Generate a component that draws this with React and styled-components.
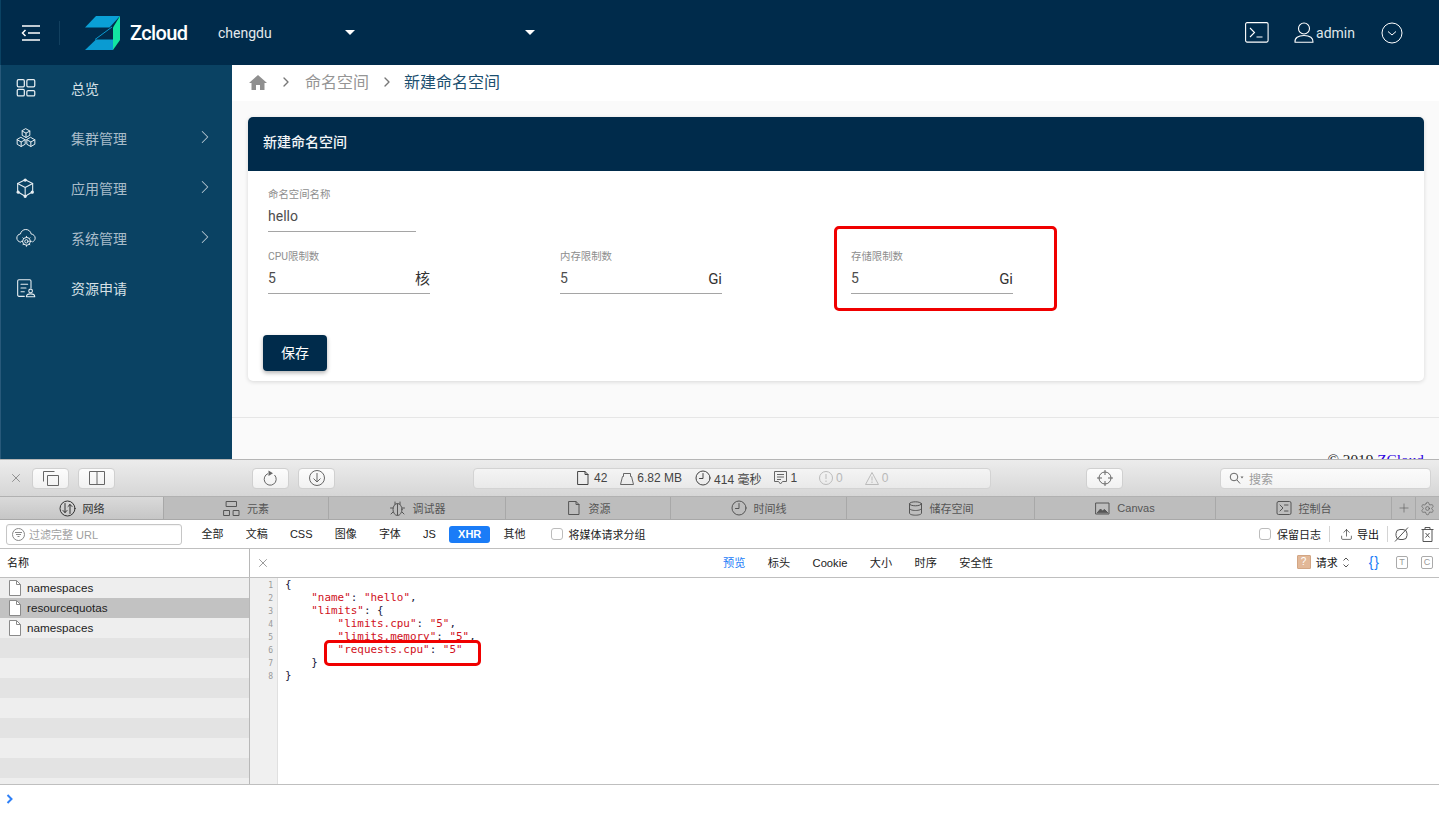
import React from "react";
import styled, { createGlobalStyle } from "styled-components";
import { ChevronRight, X, Plus, Settings, Upload } from "lucide-react";

const NAV = [
  { key: "overview", label: "总览" },
  { key: "cluster", label: "集群管理", more: true },
  { key: "app", label: "应用管理", more: true },
  { key: "system", label: "系统管理", more: true },
  { key: "request", label: "资源申请" },
];

const TABS = [
  { key: "net", label: "网络", width: 164, active: true },
  { key: "el", label: "元素", width: 165 },
  { key: "dbg", label: "调试器", width: 177 },
  { key: "res", label: "资源", width: 165 },
  { key: "time", label: "时间线", width: 176 },
  { key: "store", label: "储存空间", width: 188 },
  { key: "canvas", label: "Canvas", width: 181 },
  { key: "con", label: "控制台", width: 176 },
];

const FILTERS = ["全部", "文稿", "CSS", "图像", "字体", "JS", "XHR", "其他"];
const DETAIL = ["预览", "标头", "Cookie", "大小", "时序", "安全性"];
const FILES = ["namespaces", "resourcequotas", "namespaces"];
const BLANK_ROWS = [3, 4, 5, 6, 7, 8, 9, 10];

const Glyph = ({ size = 20, box = 24, sw = 1.5, children }) => (
  <svg width={size} height={size} viewBox={`0 0 ${box} ${box}`} fill="none" stroke="currentColor" strokeWidth={sw} strokeLinecap="round" strokeLinejoin="round">
    {children}
  </svg>
);

const NavIcon = ({ name }) => {
  if (name === "overview")
    return (
      <Glyph>
        <rect x="1.5" y="2" width="8.5" height="8.5" rx="1.5" />
        <rect x="13" y="2" width="9.5" height="8.5" rx="1.5" />
        <rect x="1.5" y="13.5" width="8.5" height="8" rx="1.5" />
        <rect x="13" y="15" width="9.5" height="6.5" rx="1.5" />
      </Glyph>
    );
  if (name === "cluster")
    return (
      <Glyph sw={1.2}>
        <path d="M12 1l4.600 2.600v5.200L12 11.400 7.400 8.800V3.600zM7.400 3.600L12 6.200l4.600-2.600M12 6.200v5.200" />
        <path d="M6.200 11.400l4.800 2.700v5.400l-4.800 2.700-4.800-2.700v-5.400zM1.400 14.100l4.800 2.700 4.800-2.700M6.200 16.800v5.400" />
        <path d="M17.800 11.400l4.800 2.700v5.400l-4.800 2.700-4.800-2.700v-5.400zM13 14.100l4.800 2.700 4.800-2.700M17.800 16.800v5.400" />
      </Glyph>
    );
  if (name === "app")
    return (
      <Glyph sw={1.3}>
        <path d="M11 2l9 4.500v10L11 22l-9-5.500v-10z" />
        <path d="M2 6.500l9 5 9-5M11 11.500V22" />
        <circle cx="11" cy="2.500" r="1.300" fill="currentColor" />
        <circle cx="2.500" cy="17" r="1.300" fill="currentColor" />
        <circle cx="19.500" cy="17" r="1.300" fill="currentColor" />
        <circle cx="11" cy="22" r="1.300" fill="currentColor" />
      </Glyph>
    );
  if (name === "system")
    return (
      <Glyph sw={1.2}>
        <path d="M5.500 17C2.800 16.600 1 14.500 1 12c0-2.600 1.900-4.600 4.300-4.800C6 4 8.500 1.800 11.700 1.800c3.400 0 6 2.300 6.500 5.400 2.800.3 4.800 2.400 4.800 5 0 2-1.200 3.600-3 4.400" />
        <circle cx="12.500" cy="16" r="2" />
        <circle cx="12.500" cy="16" r="4.600" />
        <path d="M12.500 10v1.400M12.500 20.600V22M6.500 16h1.400M17.100 16h1.400M8.300 11.800l1 1M15.700 19.200l1 1M16.700 11.800l-1 1M9.300 19.200l-1 1" />
      </Glyph>
    );
  return (
    <Glyph sw={1.3}>
      <path d="M10 22H3.500A1.500 1.500 0 012 20.500v-17A1.500 1.500 0 013.500 2h13A1.500 1.500 0 0118 3.500V12" />
      <path d="M6 7.500h8M6 12h6M6 16.500h4" />
      <circle cx="17.500" cy="15.500" r="2.200" />
      <path d="M12.500 22.500c0-2.500 2-3.500 5-3.500s5 1 5 3.500z" />
    </Glyph>
  );
};

const Logo = () => (
  <svg width="35" height="34" viewBox="0 0 35 34">
    <path d="M11 0h24L24.500 11.500H0z" fill="#0aa0d6" />
    <path d="M35 0v24l-7 10V11.500z" fill="#12e6a2" />
    <path d="M11 23.500h17V34H0z" fill="#0a9bd2" />
    <path d="M10 23.500L27 11" stroke="#0a9bd2" strokeWidth="1" fill="none" />
  </svg>
);

const TabIcon = ({ name }) => {
  if (name === "net")
    return (
      <Glyph size={17} box={17} sw={1}>
        <circle cx="8.500" cy="8.500" r="7.500" />
        <path d="M6 3.500v9M4 10.500l2 2 2-2M11 13.500v-9M9 6.500l2-2 2 2" />
      </Glyph>
    );
  if (name === "el")
    return (
      <Glyph size={17} box={17} sw={1}>
        <rect x="3.500" y="1.500" width="10" height="5" />
        <rect x="1" y="10.500" width="5.500" height="5" />
        <rect x="10.500" y="10.500" width="5.500" height="5" />
      </Glyph>
    );
  if (name === "dbg")
    return (
      <Glyph size={17} box={17} sw={1}>
        <ellipse cx="8.500" cy="9.500" rx="4.500" ry="6" />
        <path d="M6 4.500V2M11 4.500V2M4 8H1.500M15.500 8H13M4 12l-2 2M13 12l2 2M8.500 4v11" />
      </Glyph>
    );
  if (name === "res")
    return (
      <Glyph size={16} box={16} sw={1}>
        <path d="M3 1.500h7l3 3v10H3zM10 1.500v3h3" />
      </Glyph>
    );
  if (name === "time")
    return (
      <Glyph size={16} box={16} sw={1}>
        <circle cx="8" cy="8" r="7" />
        <path d="M8 3.500V8.500H4.500" />
      </Glyph>
    );
  if (name === "store")
    return (
      <Glyph size={15} box={15} sw={1}>
        <ellipse cx="7.500" cy="2.800" rx="6" ry="2" />
        <path d="M1.500 2.800v9.400c0 1.100 2.700 2 6 2s6-.9 6-2V2.800M1.500 7.500c0 1.100 2.700 2 6 2s6-.9 6-2" />
      </Glyph>
    );
  if (name === "canvas")
    return (
      <Glyph size={15} box={15} sw={1}>
        <rect x="1" y="2" width="13" height="11" />
        <path d="M2.500 11.500L5.500 8l2 2 2-1.500 3 3z" fill="currentColor" />
      </Glyph>
    );
  return (
    <Glyph size={16} box={16} sw={1}>
      <rect x="1" y="1.500" width="14" height="13" rx="1.500" />
      <path d="M4 5l3 3-3 3M8.500 11H12M8.500 5H12" />
    </Glyph>
  );
};

const DocIcon = () => (
  <svg width="12" height="16" viewBox="0 0 12 16" fill="#fff" stroke="#8a8a8a" strokeWidth="1">
    <path d="M.5.500h7l4 4v11H.500z" />
    <path d="M7.500.500v4h4" fill="none" />
  </svg>
);

export default function App() {
  return (
    <Page>
      <GlobalStyle />
      <AppArea>
        <Header>
          <MenuButton>
            <svg width="20" height="18" viewBox="0 0 20 18" fill="none" stroke="#fff" strokeWidth="1.500">
              <path d="M1 2h18M7 9h12M1 16h18M4.500 6L1.500 9l3 3" />
            </svg>
          </MenuButton>
          <HeaderDivider />
          <LogoWrap>
            <Logo />
            <Brand>Zcloud</Brand>
          </LogoWrap>
          <Selector $width="137px">
            <span>chengdu</span>
            <Caret />
          </Selector>
          <Selector $width="157px">
            <span />
            <Caret />
          </Selector>
          <HeaderRight>
            <svg width="24" height="21" viewBox="0 0 24 21" fill="none" stroke="#fff" strokeWidth="1.100">
              <rect x=".600" y=".600" width="22.500" height="19.500" rx="1.500" />
              <path d="M5 6l4.500 4.500L5 15M11.500 15h6" />
            </svg>
            <UserBox>
              <svg width="20" height="21" viewBox="0 0 20 21" fill="none" stroke="#fff" strokeWidth="1.100">
                <circle cx="10" cy="6.500" r="5.500" />
                <path d="M1 20.300c-.4-4.300 3-6.800 9-6.800s9.400 2.500 9 6.800z" strokeLinejoin="round" />
              </svg>
              <span>admin</span>
            </UserBox>
            <svg width="22" height="22" viewBox="0 0 22 22" fill="none" stroke="#fff" strokeWidth="1">
              <circle cx="11" cy="11" r="10" />
              <path d="M7 9.500l4 3.500 4-3.500" />
            </svg>
          </HeaderRight>
        </Header>
        <Body>
          <Sidebar>
            {NAV.map((item) => (
              <NavItem key={item.key}>
                <NavIconBox>
                  <NavIcon name={item.key} />
                </NavIconBox>
                <NavLabel $dim={item.more}>{item.label}</NavLabel>
                {item.more && (
                  <NavArrow>
                    <ChevronRight size={22} strokeWidth={1.100} />
                  </NavArrow>
                )}
              </NavItem>
            ))}
          </Sidebar>
          <Main>
            <Crumbs>
              <svg width="18" height="15" viewBox="0 0 18 15" fill="#8f8f8f">
                <path d="M9 0L0 8h2.500v7h4.500v-5h4v5h4.500V8H18z" />
              </svg>
              <ChevronRight size={16} color="#777" strokeWidth={2} />
              <CrumbLink>命名空间</CrumbLink>
              <ChevronRight size={16} color="#777" strokeWidth={2} />
              <CrumbCurrent>新建命名空间</CrumbCurrent>
            </Crumbs>
            <Content>
              <Card>
                <CardHead>新建命名空间</CardHead>
                <CardBody>
                  <Field $width="148px">
                    <FieldLabel>命名空间名称</FieldLabel>
                    <FieldValue>hello</FieldValue>
                  </Field>
                  <FieldRow>
                    <Field $width="162px">
                      <FieldLabel>CPU限制数</FieldLabel>
                      <FieldValue>
                        5<Unit>核</Unit>
                      </FieldValue>
                    </Field>
                    <Field $width="162px">
                      <FieldLabel>内存限制数</FieldLabel>
                      <FieldValue>
                        5<Unit>Gi</Unit>
                      </FieldValue>
                    </Field>
                    <MarkedField $width="162px">
                      <FieldLabel>存储限制数</FieldLabel>
                      <FieldValue>
                        5<Unit>Gi</Unit>
                      </FieldValue>
                      <FieldMark />
                    </MarkedField>
                  </FieldRow>
                  <SaveButton>保存</SaveButton>
                </CardBody>
              </Card>
            </Content>
            <Footer>
              © 2019 <FooterLink>ZCloud</FooterLink>
            </Footer>
          </Main>
        </Body>
      </AppArea>

      <Devtools>
        <Toolbar>
          <ToolClose>
            <X size={14} strokeWidth={1} />
          </ToolClose>
          <ToolButton>
            <svg width="16" height="15" viewBox="0 0 16 15" fill="none" stroke="#666">
              <path d="M.500 10.500V.500h11M4.500 4.500h11v10h-11z" />
            </svg>
          </ToolButton>
          <ToolButton>
            <svg width="16" height="14" viewBox="0 0 16 14" fill="none" stroke="#666">
              <path d="M.500.500h15v13H.500zM8 .500v13" />
            </svg>
          </ToolButton>
          <ToolGap $w="119px" />
          <ToolButton>
            <svg width="15" height="16" viewBox="0 0 15 16" fill="none" stroke="#666">
              <path d="M5 3.600A6 6 0 1 0 11.500 5" />
              <path d="M5.500 .500L10 3.300 5.500 6z" fill="#666" stroke="none" />
            </svg>
          </ToolButton>
          <ToolButton>
            <svg width="16" height="16" viewBox="0 0 16 16" fill="none" stroke="#666">
              <circle cx="8" cy="8" r="7.500" />
              <path d="M8 3v9M4.500 8.500L8 12l3.500-3.500" />
            </svg>
          </ToolButton>
          <StatusBar>
            <StatusItem>
              <TabIcon name="res" />
              42
            </StatusItem>
            <StatusItem>
              <svg width="14" height="13" viewBox="0 0 14 13" fill="none" stroke="#666">
                <path d="M.500 12.500l2-8h1V1.500h7v3h1l2 8z" />
              </svg>
              6.82 MB
            </StatusItem>
            <StatusItem>
              <TabIcon name="time" />
              414 毫秒
            </StatusItem>
            <StatusItem>
              <svg width="13" height="14" viewBox="0 0 13 14" fill="none" stroke="#666">
                <path d="M.500.500h12v10h-4l-2 2.500-2-2.500h-4zM3 3.500h7M3 6h7M3 8.500h4" />
              </svg>
              1
            </StatusItem>
            <StatusItem $muted>
              <svg width="14" height="14" viewBox="0 0 14 14" fill="none" stroke="#bbb">
                <circle cx="7" cy="7" r="6.500" />
                <path d="M7 3v5M7 9.500v1.500" />
              </svg>
              0
            </StatusItem>
            <StatusItem $muted>
              <svg width="14" height="13" viewBox="0 0 14 13" fill="none" stroke="#bbb">
                <path d="M7 .500l6.500 12H.500zM7 4.500v4M7 9.500v1.500" />
              </svg>
              0
            </StatusItem>
          </StatusBar>
          <ToolGap $w="77px" />
          <ToolButton>
            <svg width="16" height="16" viewBox="0 0 16 16" fill="none" stroke="#666">
              <circle cx="8" cy="8" r="6" />
              <path d="M8 0v5M8 11v5M0 8h5M11 8h5" />
            </svg>
          </ToolButton>
          <SearchBox>
            <svg width="15" height="12" viewBox="0 0 15 12" fill="none" stroke="#666">
              <circle cx="5" cy="5" r="3.800" />
              <path d="M8 8l3 3.500" />
              <path d="M11.500 4.500h3l-1.500 2z" fill="#666" stroke="none" />
            </svg>
            搜索
          </SearchBox>
        </Toolbar>

        <TabBar>
          {TABS.map((tab) => (
            <Tab key={tab.key} $width={tab.width} $active={tab.active}>
              <TabIcon name={tab.key} />
              {tab.label}
            </Tab>
          ))}
          <TabSquare>
            <Plus size={14} strokeWidth={1} />
          </TabSquare>
          <TabSquare $last>
            <Settings size={15} strokeWidth={1} />
          </TabSquare>
        </TabBar>

        <FilterBar>
          <UrlFilter>
            <svg width="13" height="13" viewBox="0 0 13 13" fill="none" stroke="#888">
              <circle cx="6.500" cy="6.500" r="6" />
              <path d="M3 4.500h7M4 6.500h5M5.500 8.500h2" />
            </svg>
            过滤完整 URL
          </UrlFilter>
          <FilterList>
            {FILTERS.map((name) => (
              <FilterTag key={name} $active={name === "XHR"}>
                {name}
              </FilterTag>
            ))}
          </FilterList>
          <CheckLabel $left="16px">
            <Check />
            将媒体请求分组
          </CheckLabel>
          <FilterRight>
            <CheckLabel>
              <Check />
              保留日志
            </CheckLabel>
            <VLine $after="2px" />
            <ExportBtn>
              <Upload size={13} strokeWidth={1.100} />
              导出
            </ExportBtn>
            <VLine $after="-2px" />
            <svg width="15" height="15" viewBox="0 0 15 15" fill="none" stroke="#555">
              <rect x="2" y="2.500" width="11" height="10" rx="4" />
              <path d="M1 14.500L14 .500" />
            </svg>
            <TrashSlot>
              <svg width="13" height="15" viewBox="0 0 13 15" fill="none" stroke="#555">
                <path d="M.500 2.500h12M4 2.500V.500h5v2M2 2.500v12h9v-12M4.500 6l4 4.500M8.500 6l-4 4.500" />
              </svg>
            </TrashSlot>
          </FilterRight>
        </FilterBar>

        <SplitHead>
          <NameCol>名称</NameCol>
          <DetailHead>
            <DetailClose>
              <X size={14} strokeWidth={1} />
            </DetailClose>
            <DetailTabs>
              {DETAIL.map((name, i) => (
                <DetailTab key={name} $active={i === 0}>
                  {name}
                </DetailTab>
              ))}
            </DetailTabs>
            <DetailRight>
              <QMark>?</QMark>
              <span>请求</span>
              <svg width="6" height="11" viewBox="0 0 6 11" fill="none" stroke="#555">
                <path d="M.500 3.500L3 1l2.500 2.500M.500 7.500L3 10l2.500-2.500" />
              </svg>
              <BlueBrace>{"{}"}</BlueBrace>
              <TinyBox>T</TinyBox>
              <TinyBox>C</TinyBox>
            </DetailRight>
          </DetailHead>
        </SplitHead>

        <Split>
          <FileList>
            {FILES.map((name, i) => (
              <FileRow key={i} $selected={i === 1}>
                <DocIcon />
                <FileName>{name}</FileName>
              </FileRow>
            ))}
            {BLANK_ROWS.map((n) => (
              <FileRow key={n} $dark={n % 2 === 1} />
            ))}
          </FileList>
          <Gutter>
            {[1, 2, 3, 4, 5, 6, 7, 8].map((n) => (
              <span key={n}>{n}</span>
            ))}
          </Gutter>
          <Code>
            <Line>{"{"}</Line>
            <Line $i={1}>
              <Str>"name"</Str>: <Str>"hello"</Str>,
            </Line>
            <Line $i={1}>
              <Str>"limits"</Str>: {"{"}
            </Line>
            <Line $i={2}>
              <Str>"limits.cpu"</Str>: <Str>"5"</Str>,
            </Line>
            <Line $i={2}>
              <Str>"limits.memory"</Str>: <Str>"5"</Str>,
            </Line>
            <Line $i={2}>
              <Str>"requests.cpu"</Str>: <Str>"5"</Str>
            </Line>
            <Line $i={1}>{"}"}</Line>
            <Line>{"}"}</Line>
            <CodeMark />
          </Code>
        </Split>
        <ConsoleLine>
          <svg width="7" height="10" viewBox="0 0 7 10" fill="none" stroke="#2f80f7" strokeWidth="2">
            <path d="M1.500 1L5.500 5l-4 4" />
          </svg>
        </ConsoleLine>
      </Devtools>
    </Page>
  );
}

const GlobalStyle = createGlobalStyle`
  html, body { margin: 0; padding: 0; height: 813px; overflow: hidden; }
  body { font-family: Roboto, "Noto Sans CJK SC", sans-serif; }
  * { box-sizing: border-box; }
`;

const Page = styled.div`
  width: 1439px;
  height: 813px;
  display: flex;
  flex-direction: column;
  overflow: hidden;
  background: #fff;
`;

const AppArea = styled.div`
  height: 459px;
  flex: none;
  display: flex;
  flex-direction: column;
  overflow: hidden;
`;

const Header = styled.header`
  height: 65px;
  flex: none;
  background: #002b4b;
  color: #fff;
  display: flex;
  align-items: center;
  padding-left: 20px;
  border-left: 1px solid #0a4263;
`;

const MenuButton = styled.div`
  width: 20px;
  height: 18px;
  display: flex;
`;

const HeaderDivider = styled.div`
  width: 1px;
  height: 24px;
  margin-left: 18px;
  background: #12405f;
`;

const LogoWrap = styled.div`
  display: flex;
  align-items: center;
  margin-left: 25px;
  width: 133px;
`;

const Brand = styled.div`
  font-family: Roboto, sans-serif;
  font-size: 20px;
  font-weight: 500;
  margin-left: 10px;
  letter-spacing: -0.6px;
`;

const Selector = styled.div`
  width: ${(p) => p.$width};
  font-size: 14px;
  color: #e4e9ed;
  display: flex;
  justify-content: space-between;
  align-items: center;
  margin-right: 23px;
`;

const Caret = styled.i`
  width: 0;
  height: 0;
  border-left: 5px solid transparent;
  border-right: 5px solid transparent;
  border-top: 5px solid #fff;
`;

const HeaderRight = styled.div`
  margin-left: auto;
  display: flex;
  align-items: center;
  padding-right: 36px;
`;

const UserBox = styled.div`
  display: flex;
  align-items: center;
  gap: 2px;
  margin: 0 26px 0 25px;
  font-size: 14px;
  color: #dfe6ea;
`;

const Body = styled.div`
  flex: 1;
  display: flex;
  min-height: 0;
`;

const Sidebar = styled.nav`
  width: 232px;
  flex: none;
  background: #0a4263;
  border-left: 1px solid #28597a;
`;

const NavItem = styled.div`
  height: 50px;
  display: flex;
  align-items: center;
  padding-left: 15px;
  color: #fff;
  position: relative;
  top: -2px;
`;

const NavIconBox = styled.div`
  width: 55px;
  display: flex;
  color: #e8eef2;
`;

const NavLabel = styled.div`
  font-size: 14px;
  margin-top: -1px;
  color: ${(p) => (p.$dim ? "#a9bcc9" : "#d6e0e6")};
`;

const NavArrow = styled.div`
  margin-left: auto;
  margin-right: 16px;
  margin-top: -3px;
  color: #b6c7d2;
  display: flex;
`;

const Main = styled.main`
  flex: 1;
  min-width: 0;
  background: #fafafa;
  display: flex;
  flex-direction: column;
`;

const Crumbs = styled.div`
  height: 36px;
  background: #fff;
  display: flex;
  align-items: center;
  padding: 0 0 2px 17px;
  gap: 11px;
  flex: none;
`;

const CrumbLink = styled.span`
  font-size: 16px;
  margin: -2px -1px 0 0;
  color: #959595;
`;

const CrumbCurrent = styled.span`
  font-size: 16px;
  margin: -2px 0 0 -2px;
  color: #1c4f70;
`;

const Content = styled.div`
  padding: 16px 15px 36px 16px;
`;

const Card = styled.section`
  height: 264px;
  background: #fff;
  border-radius: 5px;
  box-shadow: 0 1px 4px rgba(0, 0, 0, 0.14);
  overflow: hidden;
`;

const CardHead = styled.div`
  height: 54px;
  background: #002b4b;
  color: #f2f5f7;
  font-size: 14px;
  font-weight: 500;
  display: flex;
  align-items: center;
  padding: 0 0 6px 15px;
`;

const CardBody = styled.div`
  padding: 18px 15px 0 20px;
  display: flex;
  flex-direction: column;
`;

const Field = styled.div`
  width: ${(p) => p.$width};
  position: relative;
`;

const MarkedField = styled(Field)`
  margin-left: -1px;
`;

const FieldLabel = styled.div`
  font-size: 10.4px;
  line-height: 11px;
  height: 13px;
  color: #8e8e8e;
`;

const FieldValue = styled.div`
  height: 30px;
  padding-top: 4px;
  font-size: 14px;
  line-height: 20px;
  color: #4d4d4d;
  border-bottom: 1px solid #a5a5a5;
  display: flex;
  justify-content: space-between;
`;

const Unit = styled.span`
  color: #333;
  font-size: 15px;
  margin-top: 1px;
`;

const FieldRow = styled.div`
  display: flex;
  gap: 130px;
  margin-top: 19px;
`;

const FieldMark = styled.div`
  position: absolute;
  left: -17px;
  top: -25px;
  width: 223px;
  height: 85px;
  border: 3px solid #f00000;
  border-radius: 5px;
`;

const SaveButton = styled.button`
  width: 64px;
  height: 36px;
  margin: 41px 0 0 -5px;
  padding: 0 0 2px;
  background: #002b4b;
  color: #fff;
  border: 0;
  border-radius: 4px;
  font-size: 14px;
  font-family: inherit;
  box-shadow: 0 2px 4px rgba(0, 0, 0, 0.3);
`;

const Footer = styled.footer`
  border-top: 1px solid #e6e6e6;
  height: 60px;
  font-family: "Liberation Serif", "Times New Roman", serif;
  font-size: 15.3px;
  text-align: right;
  padding: 33px 15px 0 0;
  color: #222;
`;

const FooterLink = styled.span`
  color: #2a00e0;
  text-decoration: underline;
`;

const Devtools = styled.div`
  flex: 1;
  min-height: 0;
  display: flex;
  flex-direction: column;
  border-top: 1px solid #b5b5b5;
  font-size: 11px;
  font-family: "Liberation Sans", "Noto Sans CJK SC", sans-serif;
  color: #111;
`;

const Toolbar = styled.div`
  height: 37px;
  flex: none;
  background: linear-gradient(#ececec, #d6d6d6);
  display: flex;
  align-items: center;
  border-bottom: 1px solid #b1b1b1;
  padding-left: 32px;
  gap: 9px;
  position: relative;
`;

const ToolClose = styled.div`
  position: absolute;
  left: 9px;
  top: 11px;
  color: #555;
  display: flex;
`;

const ToolButton = styled.div`
  width: 37px;
  height: 21px;
  flex: none;
  background: linear-gradient(#fcfcfc, #f1f1f1);
  border: 1px solid #d0d0d0;
  border-radius: 4px;
  display: flex;
  align-items: center;
  justify-content: center;
`;

const ToolGap = styled.div`
  width: ${(p) => p.$w};
  flex: none;
`;

const StatusBar = styled.div`
  width: 518px;
  height: 21px;
  flex: none;
  margin-left: 129px;
  background: linear-gradient(#f4f4f4, #e9e9e9);
  border: 1px solid #d3d3d3;
  border-radius: 4px;
  display: flex;
  align-items: center;
  padding-left: 101px;
  gap: 13px;
  font-size: 12px;
  color: #444;
`;

const StatusItem = styled.div`
  display: flex;
  align-items: center;
  gap: 3px;
  margin-left: ${(p) => (p.$muted ? "9px" : "0")};
  color: ${(p) => (p.$muted ? "#b8b8b8" : "#444")};
  svg { flex: none; }
`;

const SearchBox = styled.div`
  width: 211px;
  height: 21px;
  margin-left: 88px;
  flex: none;
  background: linear-gradient(#fbfbfb, #f3f3f3);
  border: 1px solid #d3d3d3;
  border-radius: 4px;
  display: flex;
  align-items: center;
  gap: 5px;
  padding-left: 8px;
  font-size: 12px;
  color: #9c9c9c;
`;

const TabBar = styled.div`
  height: 23px;
  flex: none;
  display: flex;
  background: #bdbdbd;
  border-bottom: 1px solid #a8a8a8;
`;

const Tab = styled.div`
  width: ${(p) => p.$width}px;
  flex: none;
  display: flex;
  align-items: center;
  justify-content: center;
  gap: 7px;
  border-right: 1px solid #a8a8a8;
  color: ${(p) => (p.$active ? "#333" : "#555")};
  background: ${(p) => (p.$active ? "linear-gradient(#dadada, #c6c6c6)" : "#bdbdbd")};
`;

const TabSquare = styled.div`
  width: ${(p) => (p.$last ? "auto" : "24px")};
  flex: ${(p) => (p.$last ? 1 : "none")};
  display: flex;
  align-items: center;
  justify-content: center;
  border-right: ${(p) => (p.$last ? "0" : "1px solid #a8a8a8")};
  color: #555;
`;

const FilterBar = styled.div`
  height: 29px;
  flex: none;
  display: flex;
  align-items: center;
  background: #fff;
  border-bottom: 1px solid #bfbfbf;
  padding-left: 6px;
`;

const UrlFilter = styled.div`
  width: 176px;
  height: 21px;
  border: 1px solid #c6c6c6;
  border-radius: 3px;
  display: flex;
  align-items: center;
  gap: 4px;
  padding-left: 5px;
  color: #a0a0a0;
  box-shadow: inset 0 1px 1px rgba(0, 0, 0, 0.05);
`;

const FilterList = styled.div`
  display: flex;
  align-items: center;
  gap: 4.2px;
  margin-left: 10.5px;
`;

const FilterTag = styled.div`
  height: 17px;
  line-height: 17px;
  padding: 0 9px;
  border-radius: 3px;
  font-weight: ${(p) => (p.$active ? 700 : 400)};
  color: ${(p) => (p.$active ? "#fff" : "#222")};
  background: ${(p) => (p.$active ? "#1a7cf7" : "transparent")};
`;

const CheckLabel = styled.label`
  display: flex;
  align-items: center;
  gap: 6px;
  margin-left: ${(p) => p.$left || "0"};
  color: #222;
`;

const Check = styled.i`
  width: 12px;
  height: 12px;
  border: 1px solid #bcbcbc;
  border-radius: 3px;
  background: #fff;
`;

const FilterRight = styled.div`
  margin-left: auto;
  display: flex;
  align-items: center;
  gap: 8px;
  padding-right: 5px;
`;

const VLine = styled.div`
  width: 1px;
  height: 16px;
  margin-right: ${(p) => p.$after};
  background: #d4d4d4;
`;

const ExportBtn = styled.div`
  display: flex;
  align-items: center;
  gap: 4px;
`;

const TrashSlot = styled.div`
  display: flex;
  margin-left: 4px;
`;

const SplitHead = styled.div`
  height: 29px;
  flex: none;
  display: flex;
  border-bottom: 1px solid #bfbfbf;
`;

const NameCol = styled.div`
  width: 250px;
  flex: none;
  border-right: 1px solid #b8b8b8;
  padding: 0 0 2px 7px;
  display: flex;
  align-items: center;
`;

const DetailHead = styled.div`
  flex: 1;
  display: flex;
  align-items: center;
  padding-bottom: 2px;
  position: relative;
`;

const DetailClose = styled.div`
  position: absolute;
  left: 6px;
  top: 7px;
  color: #555;
  display: flex;
`;

const DetailTabs = styled.div`
  display: flex;
  align-items: baseline;
  gap: 22.4px;
  margin-left: 473px;
  font-size: 11.2px;
`;

const DetailTab = styled.div`
  color: ${(p) => (p.$active ? "#1a7cf7" : "#222")};
`;

const DetailRight = styled.div`
  margin-left: auto;
  display: flex;
  align-items: center;
  gap: 5px;
  padding-right: 6px;
`;

const QMark = styled.div`
  width: 14px;
  height: 14px;
  background: #e2b898;
  color: #fff;
  border: 1px solid #d3a684;
  border-radius: 1px;
  font-size: 10px;
  line-height: 12px;
  text-align: center;
`;

const BlueBrace = styled.div`
  color: #1a7cf7;
  font-size: 14px;
  letter-spacing: 1px;
  margin: 0 3px 0 15px;
`;

const TinyBox = styled.div`
  width: 12px;
  height: 13px;
  margin-left: 8px;
  border: 1px solid #aaa;
  border-radius: 2px;
  color: #999;
  font-size: 9px;
  line-height: 11px;
  text-align: center;
`;

const Split = styled.div`
  height: 206px;
  flex: none;
  display: flex;
`;

const FileList = styled.div`
  width: 250px;
  flex: none;
  border-right: 1px solid #b8b8b8;
  overflow: hidden;
`;

const FileRow = styled.div`
  height: 20px;
  display: flex;
  align-items: center;
  gap: 6px;
  padding-left: 9px;
  background: ${(p) => (p.$selected ? "#c2c2c2" : p.$dark ? "#e3e3e3" : "#eeeeee")};
  color: #222;
  svg { flex: none; }
`;

const FileName = styled.span`
  font-size: 11.7px;
  margin-top: -2px;
`;

const Gutter = styled.div`
  width: 28px;
  flex: none;
  background: #f0f0f0;
  border-right: 1px solid #e0e0e0;
  display: flex;
  flex-direction: column;
  align-items: flex-end;
  padding: 1px 4px 0 0;
  font-family: "DejaVu Sans Mono", monospace;
  font-size: 8px;
  line-height: 13px;
  color: #999;
`;

const Code = styled.div`
  position: relative;
  flex: 1;
  padding: 0 0 0 7px;
  font-family: "DejaVu Sans Mono", "Liberation Mono", monospace;
  font-size: 10.93px;
  line-height: 13px;
  color: #1a1a40;
`;

const Line = styled.div`
  height: 13px;
  padding-left: ${(p) => (p.$i || 0) * 26.3}px;
  white-space: pre;
`;

const Str = styled.span`
  color: #d0101c;
`;

const CodeMark = styled.div`
  position: absolute;
  left: 46px;
  top: 62px;
  width: 157px;
  height: 26px;
  border: 3px solid #f00000;
  border-radius: 5px;
`;

const ConsoleLine = styled.div`
  flex: 1;
  border-top: 1px solid #bfbfbf;
  padding: 9px 0 0 6px;
  display: flex;
  align-items: flex-start;
`;
